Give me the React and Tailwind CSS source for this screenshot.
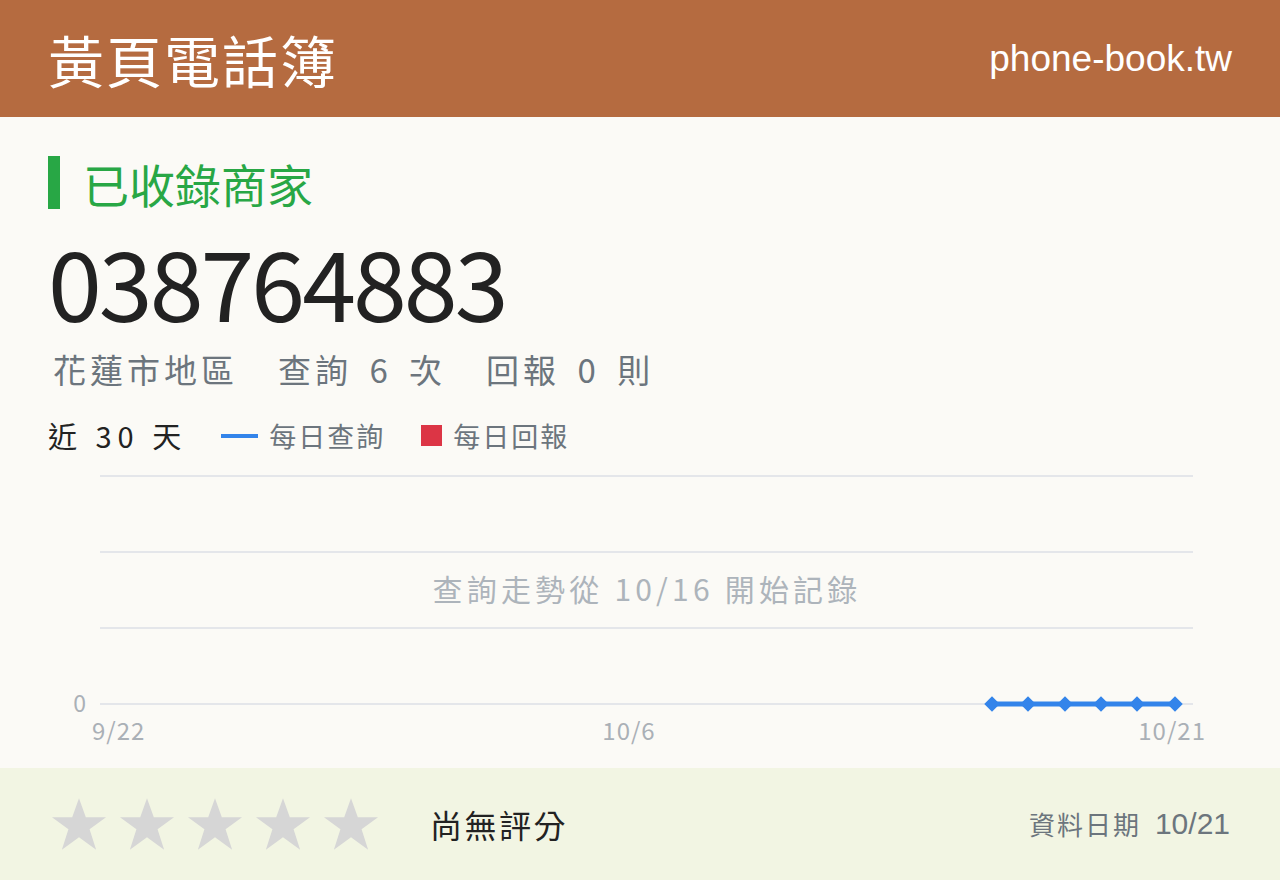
import React from "react";

const CJK = '"Noto Sans CJK TC", "Noto Sans", sans-serif';
const LATIN = '"Liberation Sans", Arial, sans-serif';

const days = ["9/22", "10/6", "10/21"];
// query dots, last six days
const queryPoints = [992, 1028, 1065, 1101, 1137, 1175];
// chart svg starts at page y = 464
const top = 464;

const Star = () => (
	<svg width="58" height="54" viewBox="0 0 24 23" className="shrink-0">
		<path d="M12 0.5l2.9 8.1h8.6l-7 5.1 2.8 8.8L12 17.1l-7.3 5.4 2.8-8.8-7-5.1h8.6z" fill="#d6d6d6" />
	</svg>
);

const TrendChart = () => (
	<svg width="1280" height="290" viewBox="0 0 1280 290" className="block">
		{[476, 552, 628, 704].map((y) => (
			<line key={y} x1="100" x2="1193" y1={y - top} y2={y - top} stroke="#e4e6ea" strokeWidth="2" />
		))}
		<text x="86" y={704 - top + 8} textAnchor="end" fontSize="23" fill="#aab0b6" fontFamily={CJK}>
			0
		</text>
		<text x="92" y={732 - top + 8} fontSize="24" letterSpacing="1" fill="#aab0b6" fontFamily={CJK}>
			{days[0]}
		</text>
		<text x="629" y={732 - top + 8} textAnchor="middle" fontSize="24" letterSpacing="1" fill="#aab0b6" fontFamily={CJK}>
			{days[1]}
		</text>
		<text x="1206" y={732 - top + 8} textAnchor="end" fontSize="24" letterSpacing="1" fill="#aab0b6" fontFamily={CJK}>
			{days[2]}
		</text>
		<text x="647" y={590 - top + 11} textAnchor="middle" fontSize="30" letterSpacing="4.2" fill="#adb4bb" fontFamily={CJK}>
			查詢走勢從 10/16 開始記錄
		</text>
		<line x1={queryPoints[0]} x2={queryPoints[5]} y1={704 - top} y2={704 - top} stroke="#3384ea" strokeWidth="5" />
		{queryPoints.map((x) => (
			<rect
				key={x}
				x={x - 5.5}
				y={704 - top - 5.5}
				width="11"
				height="11"
				fill="#3384ea"
				transform={`rotate(45 ${x} ${704 - top})`}
			/>
		))}
	</svg>
);

export default function App() {
	return (
		<div className="w-[1280px] h-[880px] bg-[#fbfaf6] flex flex-col" style={{ fontFamily: CJK }}>
			<header className="h-[117px] shrink-0 bg-[#b56b40] flex items-center justify-between px-[48px] text-white">
				<h1 className="text-[56px] leading-none tracking-[2px]">黃頁電話簿</h1>
				<span className="text-[37px] leading-none" style={{ fontFamily: LATIN }}>
					phone-book.tw
				</span>
			</header>

			<div className="flex-1 flex flex-col">
				<div className="px-12 pt-[39px]">
					<div className="flex items-center gap-[23px]">
						<span className="w-3 h-[53px] bg-[#28a745]" />
						<h2 className="text-[46px] leading-none text-[#28a745]">已收錄商家</h2>
					</div>
					<div className="mt-[16px] text-[97px] leading-[110px] text-[#222] tracking-[-3px]">038764883</div>
					<div className="mt-[12px] ml-[5px] flex gap-[40px] text-[33px] leading-[44px] text-[#6c757d] tracking-[4px] [word-spacing:6px]">
						<span>花蓮市地區</span>
						<span>查詢 6 次</span>
						<span>回報 0 則</span>
					</div>
					<div className="mt-[30px] flex items-center">
						<span className="text-[29px] leading-none text-[#222] tracking-[6px]">近 30 天</span>
						<span className="ml-[34px] w-[37px] h-1 bg-[#3384ea]" />
						<span className="ml-[11px] text-[27px] leading-none text-[#6c757d] tracking-[2px]">每日查詢</span>
						<span className="ml-[36px] w-[21px] h-[21px] bg-[#dc3545]" />
						<span className="ml-[11px] text-[27px] leading-none text-[#6c757d] tracking-[2px]">每日回報</span>
					</div>
				</div>
				<div className="mt-[14px]">
					<TrendChart />
				</div>
			</div>

			<footer className="h-[112px] shrink-0 bg-[#f2f5e3] flex items-center px-[50px]">
				<div className="flex gap-[10px]">
					{[0, 1, 2, 3, 4].map((i) => (
						<Star key={i} />
					))}
				</div>
				<span className="ml-[50px] text-[32px] leading-none text-[#222] tracking-[2.5px]">尚無評分</span>
				<span className="ml-auto text-[26px] leading-none text-[#6c757d] tracking-[2px]">資料日期</span>
				<span className="ml-[14px] text-[30px] leading-none text-[#6c757d]" style={{ fontFamily: LATIN }}>
					10/21
				</span>
			</footer>
		</div>
	);
}
